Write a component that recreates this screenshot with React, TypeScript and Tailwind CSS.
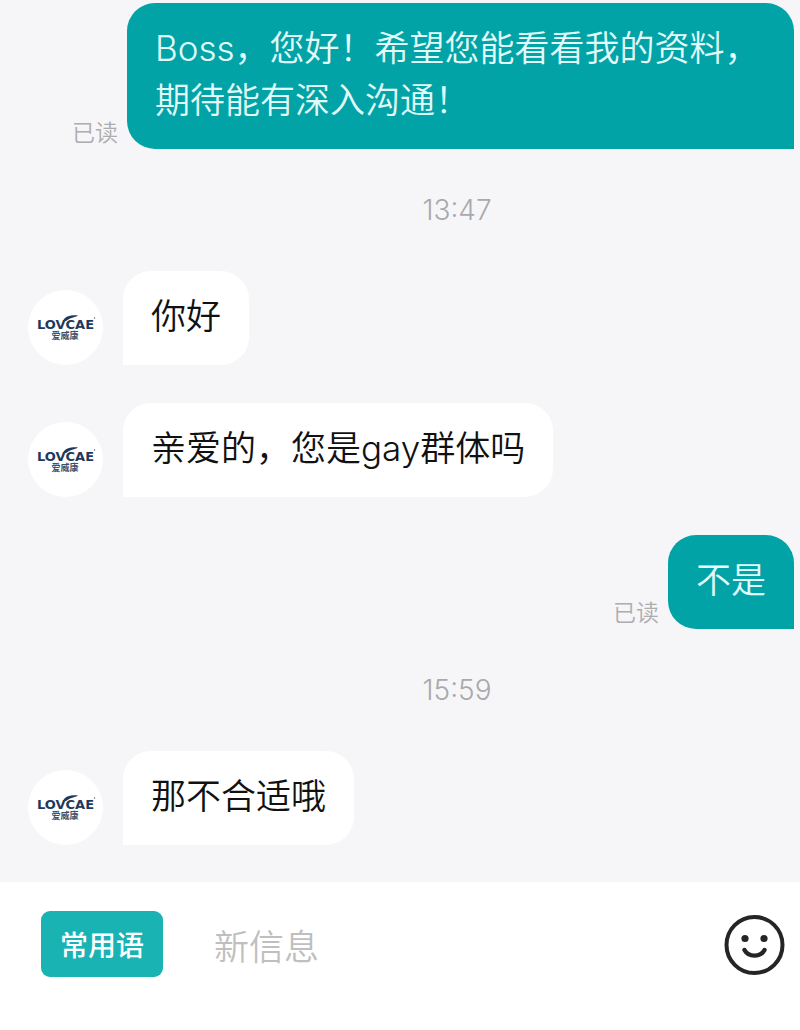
import { useState } from 'react'
import clsx from 'clsx'

type Item =
  | { kind: 'time'; text: string }
  | { kind: 'in'; text: string }
  | { kind: 'out'; text: string }

const items: Item[] = [
  { kind: 'out', text: 'Boss，您好！希望您能看看我的资料，期待能有深入沟通！' },
  { kind: 'time', text: '13:47' },
  { kind: 'in', text: '你好' },
  { kind: 'in', text: '亲爱的，您是gay群体吗' },
  { kind: 'out', text: '不是' },
  { kind: 'time', text: '15:59' },
  { kind: 'in', text: '那不合适哦' },
]

function Avatar() {
  return (
    <div className="flex size-[75px] shrink-0 items-center justify-center rounded-full bg-white">
      <svg viewBox="0 0 60 28" className="h-[28px] w-[60px]" role="img" aria-label="LOVCAE 爱威康">
        <text
          x="1"
          y="15"
          className="fill-[#1d3a5c] font-['DejaVu_Sans',sans-serif] text-[13px] font-bold"
        >
          LOVCAE
        </text>
        {/* swoosh over the V and C */}
        <path d="M27 7 C29 2.5 34 1 42 1.4 C39 3.4 34 3.6 30 7 Z" fill="#1d3a5c" />
        <circle cx="58.5" cy="4" r="0.8" fill="#5a6d85" />
        <text
          x="29"
          y="25"
          textAnchor="middle"
          className="fill-[#3d5068] font-['Noto_Sans_CJK_SC',sans-serif] text-[9px] font-bold"
        >
          爱威康
        </text>
      </svg>
    </div>
  )
}

function Bubble({ text, mine }: { text: string; mine?: boolean }) {
  return (
    <p
      className={clsx(
        'rounded-[28px] px-7 pt-[19px] pb-[23px] text-[35px] leading-[52px] font-[350]',
        mine ? 'rounded-br-none bg-[#02a3a6] text-[#e2fbfa]' : 'rounded-bl-none bg-white text-[#111]',
      )}
    >
      {text}
    </p>
  )
}

function Row({ item }: { item: Item }) {
  if (item.kind === 'time') {
    return (
      <time className="my-[5px] block pl-[114px] text-center text-[28px] leading-9 font-light text-[#a9a9ac]">
        {item.text}
      </time>
    )
  }
  if (item.kind === 'in') {
    return (
      <div className="flex items-end gap-5 pr-24 pl-7">
        <Avatar />
        <Bubble text={item.text} />
      </div>
    )
  }
  return (
    <div className="flex items-end justify-end gap-[9px] pr-[6px] pl-[72px]">
      <span className="shrink-0 text-[23px] leading-8 font-[350] text-[#adadb0]">已读</span>
      <Bubble text={item.text} mine />
    </div>
  )
}

function SmileIcon() {
  return (
    <svg viewBox="0 0 62 62" className="size-[62px]" fill="none" stroke="#252527" aria-hidden="true">
      <circle cx="30.5" cy="32" r="28" strokeWidth="4" />
      <circle cx="21" cy="25.5" r="3.6" fill="#252527" stroke="none" />
      <circle cx="40" cy="25.5" r="3.6" fill="#252527" stroke="none" />
      <path d="M20.5 37 C24.5 44.5 36.5 44.5 40.5 37" strokeWidth="4.4" strokeLinecap="round" />
    </svg>
  )
}

export default function App() {
  const [draft, setDraft] = useState('')

  return (
    <div className="flex min-h-screen flex-col bg-[#f6f6f8] font-['Inter','Noto_Sans_CJK_SC',sans-serif]" lang="zh-CN">
      <main className="flex grow flex-col gap-[38px] pt-[3px] pb-[37px]">
        {items.map((item, i) => (
          <Row key={i} item={item} />
        ))}
      </main>

      <footer className="flex items-center bg-white pt-[29px] pr-[14px] pb-[53px] pl-[41px]">
        <button
          type="button"
          className="h-[66px] w-[122px] shrink-0 rounded-[9px] bg-[#19b3b4] pt-1 text-[28px] leading-9 font-medium text-white"
        >
          常用语
        </button>
        <input
          type="text"
          aria-label="新信息"
          placeholder="新信息"
          value={draft}
          onChange={(e) => setDraft(e.target.value)}
          className="ml-[51px] min-w-0 grow bg-transparent pt-1.5 text-[35px] leading-[52px] font-[350] text-[#111] outline-none placeholder:text-[#bfbfbf]"
        />
        <button type="button" aria-label="表情" className="shrink-0">
          <SmileIcon />
        </button>
      </footer>
    </div>
  )
}
